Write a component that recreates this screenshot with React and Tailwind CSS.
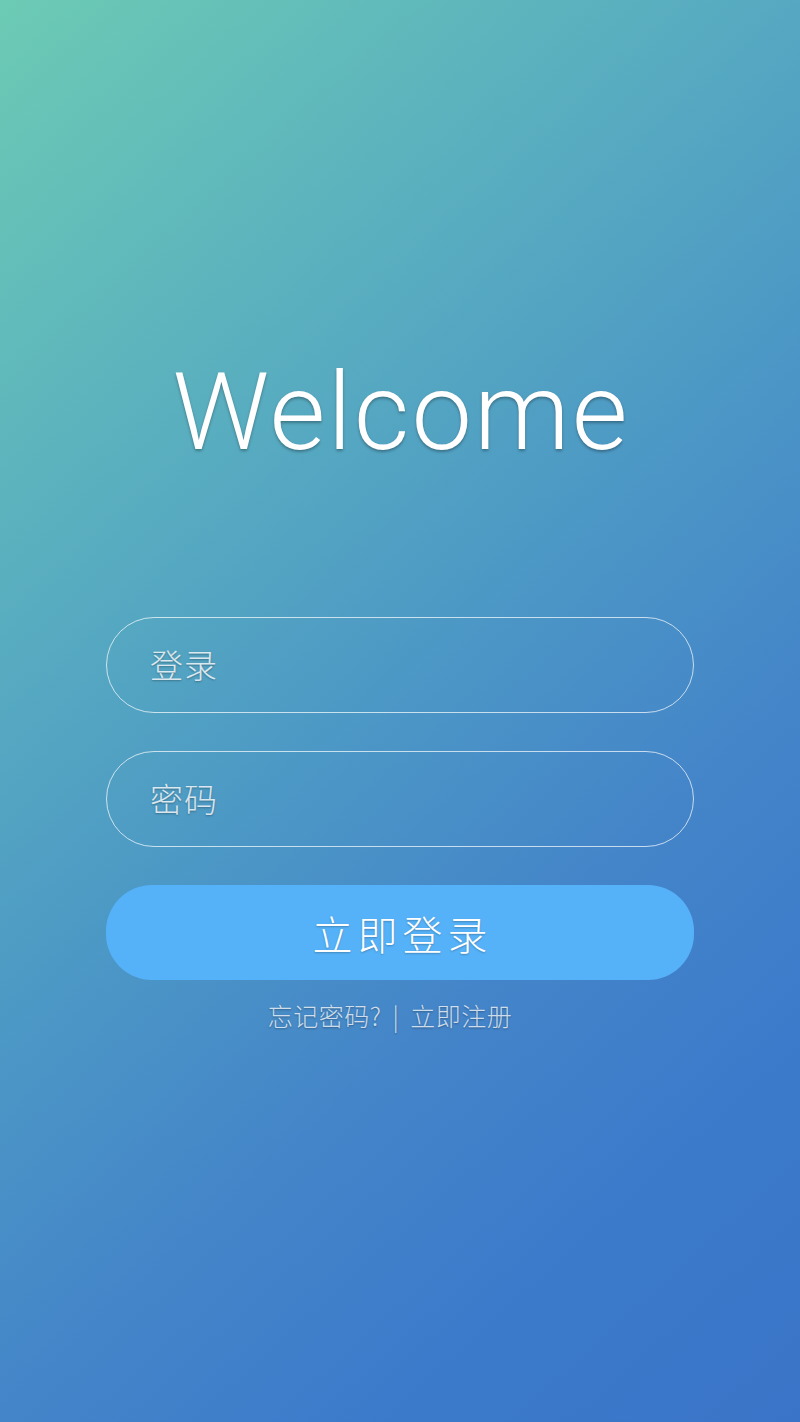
export default function App() {
  const cjk = { fontFamily: '"Noto Sans CJK SC", "Noto Sans", sans-serif' };
  return (
    <div className="w-[800px] h-[1422px] bg-[linear-gradient(138deg,#6ccbb4_0%,#56a9c1_33%,#4b96c6_50%,#4485c9_66%,#3b7acb_83%,#3a74c8_100%)] flex flex-col items-center">
      <h1
        className="mt-[358px] text-[108px] leading-[108px] text-white font-light tracking-[2px] pl-[2px] [text-shadow:0_2px_3px_rgba(0,0,0,0.3)]"
        style={{ fontFamily: '"Helvetica Neue", Roboto, "Liberation Sans", sans-serif' }}
      >
        Welcome
      </h1>
      <div className="mt-[151px] w-[588px] flex flex-col">
        <div className="h-[96px] rounded-[48px] border border-white/70 flex items-center pl-[43px]">
          <span style={cjk} className="text-[33px] font-light tracking-[1px] text-white/80 [text-shadow:0_1px_2px_rgba(0,0,0,0.3)]">登录</span>
        </div>
        <div className="mt-[38px] h-[96px] rounded-[48px] border border-white/70 flex items-center pl-[43px]">
          <span style={cjk} className="text-[33px] font-light tracking-[1px] text-white/80 [text-shadow:0_1px_2px_rgba(0,0,0,0.3)]">密码</span>
        </div>
        <div className="mt-[38px] h-[95px] rounded-[46px] bg-[#56b2f8] flex items-center justify-center">
          <span style={cjk} className="text-[40px] font-light text-white tracking-[5px] pl-[5px] [text-shadow:0_1px_2px_rgba(0,0,0,0.25)]">立即登录</span>
        </div>
        <div style={cjk} className="mt-[17px] flex justify-center items-center gap-[11px] pr-[20px] text-[25px] font-light tracking-[0.5px] text-white/75 [text-shadow:0_1px_2px_rgba(0,0,0,0.3)]">
          <span>忘记密码?</span>
          <span>|</span>
          <span>立即注册</span>
        </div>
      </div>
    </div>
  );
}
